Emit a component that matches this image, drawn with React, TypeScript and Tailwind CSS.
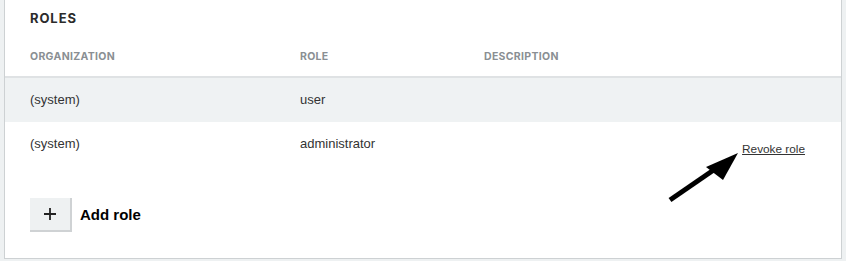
import React from "react";

export default function App() {
  return (
    <div className="w-[846px] h-[261px] bg-[#eef1f2] pl-1 pr-[4px] relative overflow-hidden">
      <div className="w-[838px] h-[259px] bg-white border-l border-r border-b border-[#cdd1d3] flex flex-col">
        <div className="h-[36px] flex items-center pl-[25px] pt-[1px]">
          <span className="text-[13px] font-bold tracking-[0.07em] text-[#2b2b2b] [font-family:Inter,sans-serif]">
            ROLES
          </span>
        </div>
        <div className="h-[42px] flex items-center pl-[25px] pt-[2px] border-b-2 border-[#dfe2e4] text-[10.5px] font-bold text-[#8a8f93] [font-family:Inter,sans-serif] tracking-[0.03em]">
          <div className="w-[270px]">ORGANIZATION</div>
          <div className="w-[184px]">ROLE</div>
          <div>DESCRIPTION</div>
        </div>
        <div className="h-[44px] flex items-center pl-[25px] bg-[#eff2f3] text-[13px] text-[#333] [font-family:'Liberation_Sans',Arial,sans-serif]">
          <div className="w-[270px]">(system)</div>
          <div className="w-[184px]">user</div>
        </div>
        <div className="h-[44px] flex items-center pl-[25px] text-[13px] text-[#333] [font-family:'Liberation_Sans',Arial,sans-serif]">
          <div className="w-[270px]">(system)</div>
          <div className="w-[184px]">administrator</div>
          <div className="flex-1" />
          <a className="mr-[36px] mt-[12px] text-[11.8px] underline text-[#333] cursor-pointer">Revoke role</a>
        </div>
        <div className="mt-[32px] pl-[25px] flex items-center gap-[8px]">
          <button className="w-[42px] h-[34px] bg-[#eef1f2] border-r-2 border-b-2 border-[#cfd2d4] flex items-center justify-center text-[#222]">
            <svg width="14" height="14" viewBox="0 0 14 14">
              <path d="M7 1v12M1 7h12" stroke="#222" strokeWidth="1.8" />
            </svg>
          </button>
          <span className="text-[15px] font-bold text-black [font-family:'Liberation_Sans',Arial,sans-serif]">Add role</span>
        </div>
      </div>
      <svg className="absolute left-0 top-0 pointer-events-none" width="846" height="261">
        <line x1="670" y1="200" x2="718" y2="167" stroke="#000" strokeWidth="5" />
        <polygon points="738,153 706,167 723,180" fill="#000" />
      </svg>
    </div>
  );
}
